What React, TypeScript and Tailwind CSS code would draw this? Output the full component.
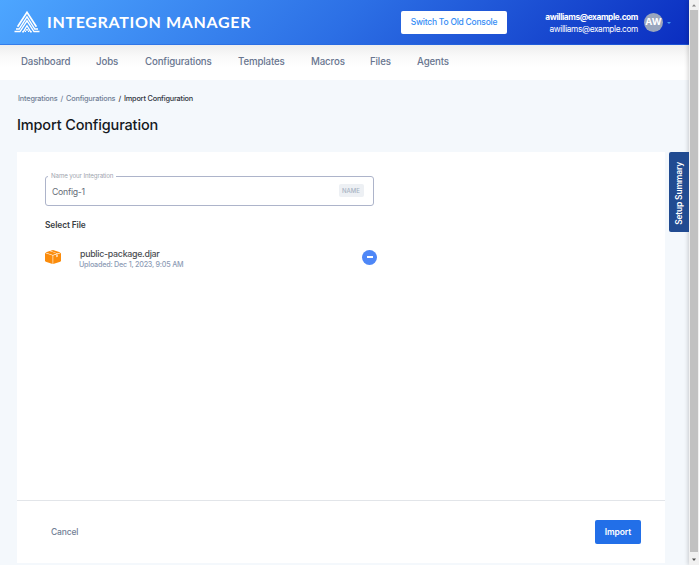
import React from "react";

const navItems = [
  { label: "Dashboard", cls: "ml-[21px] w-[75px]" },
  { label: "Jobs", cls: "w-[49px]" },
  { label: "Configurations", cls: "w-[93px]" },
  { label: "Templates", cls: "w-[73px]" },
  { label: "Macros", cls: "w-[59px]" },
  { label: "Files", cls: "w-[47px]" },
  { label: "Agents", cls: "" },
];

function Logo() {
  return (
    <svg className="ml-[14px] mt-[10px] h-[23px] w-[26px] shrink-0" viewBox="0 0 26 23" fill="none" stroke="white" strokeWidth="1.35">
      <path d="M.5 21.5H6L13 10.8l7 10.7h5.5" />
      <path d="M2 19h3.2L13 6.8 20.8 19H24" />
      <path d="M3.6 16.8L13 2.4l9.4 14.4" strokeWidth="1.7" />
      <path d="M8.2 21.7h1.2l3.6-6 3.6 6h1.2" />
      <path d="M11.2 22l1.8-3 1.8 3" strokeWidth="1" />
    </svg>
  );
}

function PackageIcon() {
  return (
    <svg className="h-[14px] w-[16px] shrink-0" viewBox="0 0 16 14">
      <path d="M0 3L7.6 5.5V14L.8 11.8 0 11z" fill="#fb8c0c" />
      <path d="M16 3L8.2 5.5V14l7-2.2.8-.8z" fill="#fb8c0c" />
      <path d="M.4 2.4L4.6 1l7.2 2.6-4 1.3z" fill="#fb8c0c" />
      <path d="M5.3.8L8 0l7.6 2.4-3.1 1z" fill="#fb8c0c" />
      <path d="M11.4 4.8l1.2-.4v2.4l-1.2.5z" fill="#fff" />
    </svg>
  );
}

function Header() {
  return (
    <header className="flex h-[45px] shrink-0 border-b border-[#2464dd]/60 bg-[linear-gradient(135deg,#4da6ff_0%,#2c6fe5_50%,#0a2dc0_100%)] text-white">
      <Logo />
      <div className="ml-[7px] mt-[11px] w-[354px] shrink-0 whitespace-nowrap font-['Lato',sans-serif] text-[16px] font-bold leading-[22px] tracking-[0.67px]">
        INTEGRATION MANAGER
      </div>
      <button className="mt-[11px] h-[23px] w-[106px] shrink-0 whitespace-nowrap rounded-[2px] bg-white text-[8.5px] font-medium tracking-[-0.25px] text-[#348cf5]">
        Switch To Old Console
      </button>
      <div className="ml-auto mt-[11px] whitespace-nowrap text-right text-[8.3px] leading-3">
        <div className="font-bold tracking-[-0.4px]">awilliams@example.com</div>
        <div className="tracking-[-0.37px]">awilliams@example.com</div>
      </div>
      <div className="ml-[6px] mt-[13px] flex size-[19px] shrink-0 items-center justify-center rounded-full bg-[#9aa6bd] text-[9.5px] font-bold">
        AW
      </div>
      <svg className="ml-[4px] mr-[18px] mt-[22px] h-[3px] w-[4px] shrink-0" viewBox="0 0 4 3">
        <path d="M0 0h4L2 2z" fill="#459bf5" />
      </svg>
    </header>
  );
}

function Scrollbar() {
  return (
    <div className="flex w-[10px] shrink-0 flex-col items-center bg-[#f1f1f1] shadow-[-1px_0_4px_rgba(0,0,0,0.18)]">
      <svg className="h-[10px] w-[10px] shrink-0" viewBox="0 0 10 10">
        <path d="M3 6.5L5 4.3l2 2.2z" fill="#858585" />
      </svg>
      <div className="w-[8px] flex-1 bg-[#c1c1c1]" />
      <svg className="h-[13px] w-[10px] shrink-0" viewBox="0 0 10 13">
        <path d="M3 6.5h4L5 9z" fill="#505050" />
      </svg>
    </div>
  );
}

export default function App() {
  return (
    <div className="relative flex h-[565px] w-[699px] overflow-hidden bg-[#f4f8fc] font-['Inter',sans-serif]">
      <div className="flex w-[689px] shrink-0 flex-col">
        <Header />
        <nav className="flex h-[35px] shrink-0 items-center bg-[linear-gradient(to_bottom,#eeeeee_0,#fafafa_12px,#ffffff_22px)] text-[9.7px] font-medium tracking-[-0.14px] text-[#68758f]">
          {navItems.map((n) => (
            <a key={n.label} className={"shrink-0 whitespace-nowrap " + n.cls}>
              {n.label}
            </a>
          ))}
        </nav>
        <div className="ml-[18px] mt-[13px] flex h-3 items-center gap-[3px] whitespace-nowrap text-[7.3px] font-medium leading-3 tracking-[-0.17px] text-[#718096]">
          <span>Integrations</span>
          <span>/</span>
          <span>Configurations</span>
          <span className="text-[#333]">/</span>
          <span className="text-[#303540]">Import Configuration</span>
        </div>
        <h1 className="ml-[17px] mt-[10px] h-5 whitespace-nowrap text-[14.5px] font-medium leading-5 tracking-[-0.15px] text-[#15191e]">
          Import Configuration
        </h1>
        <main className="ml-[17px] mt-[17px] flex h-[411px] w-[648px] shrink-0 flex-col bg-white">
          <div className="flex-1 pl-7 pt-5">
            <fieldset className="flex h-[34px] w-[328.5px] flex-col rounded-[3px] border border-[#adb4ca] pl-[2px]">
              <legend className="whitespace-nowrap px-[3px] text-[6.2px] leading-[8px] tracking-[-0.13px] text-[#a0a5af]">Name your Integration</legend>
              <div className="flex h-[22px] items-center justify-between pl-1 pr-[9px]">
                <span className="pt-[3px] text-[8.7px] leading-[13px] tracking-[-0.25px] text-[#666d78]">Config-1</span>
                <span className="mb-px flex h-[13px] w-[25px] items-center justify-center rounded-[2px] bg-[#edf0f4] text-[6px] font-medium text-[#a7b3c3]">
                  NAME
                </span>
              </div>
            </fieldset>
            <div className="mt-[13px] text-[8.4px] font-semibold leading-3 tracking-[-0.1px] text-[#3a3e44]">Select File</div>
            <div className="mt-[14px] flex h-[24px] w-[332px] items-center">
              <PackageIcon />
              <div className="ml-[18px] mt-[4px] flex-1 whitespace-nowrap">
                <div className="pl-px text-[8.8px] font-medium leading-[12px] tracking-[-0.27px] text-[#4a4d52]">public-package.djar</div>
                <div className="text-[7.2px] font-medium leading-[10px] tracking-[-0.22px] text-[#8d9bb5]">Uploaded: Dec 1, 2023, 9:05 AM</div>
              </div>
              <div className="flex size-[15px] items-center justify-center rounded-full bg-[#4e87f7]">
                <div className="h-[1.5px] w-[6px] bg-white" />
              </div>
            </div>
          </div>
          <footer className="flex h-[63px] items-center justify-between border-t border-[#e2e5e9] pl-[34px] pr-6">
            <button className="text-[8.5px] font-medium tracking-[-0.15px] text-[#718096]">Cancel</button>
            <button className="h-6 w-[46px] rounded-[2px] bg-[#226fe8] text-[8.5px] font-semibold tracking-[-0.1px] text-white">Import</button>
          </footer>
        </main>
      </div>
      <Scrollbar />
      <div className="absolute left-[669px] top-[152px] flex h-20 w-5 items-center justify-center rounded-l-[2px] bg-[#214b91] pt-[3px]">
        <span className="rotate-180 whitespace-nowrap text-[8.5px] font-semibold tracking-[-0.22px] text-white [writing-mode:vertical-rl]">Setup Summary</span>
      </div>
    </div>
  );
}
